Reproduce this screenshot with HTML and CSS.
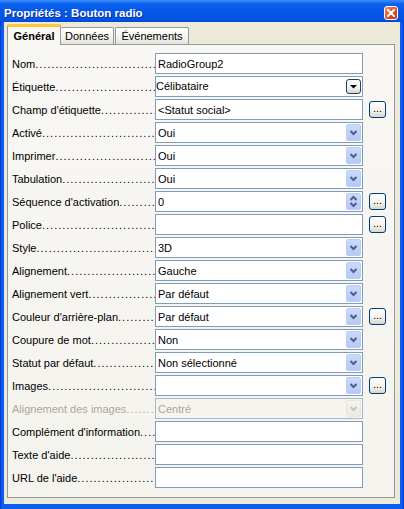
FILE: index.html
```html
<!doctype html>
<html lang="fr">
<head>
    <meta charset="UTF-8">
    <title>Propriétés : Bouton radio</title>
    <link rel="stylesheet" href="styles.css">
</head>
<body>
<div class="window">
    <div class="titlebar">
        <span class="title">Propriétés : Bouton radio</span>
        <span class="close">
            <svg width="12" height="12" viewBox="0 0 12 12"><path d="M3 3 L9 9 M9 3 L3 9" stroke="#fff" stroke-width="2" stroke-linecap="square"/></svg>
        </span>
    </div>
    <div class="client">
        <div class="tabs">
            <div class="tab active">Général</div>
            <div class="tab tab-data">Données</div>
            <div class="tab tab-events">Événements</div>
        </div>
        <div class="panel">
            <div class="row">
                <span class="label">Nom</span>
                <div class="field"><span class="value">RadioGroup2</span></div>
            </div>
            <div class="row">
                <span class="label">Étiquette</span>
                <div class="field"><span class="value flush">Célibataire</span>
                    <span class="list-btn"><svg width="13" height="13" viewBox="0 0 13 13"><polygon points="3,5 10,5 6.5,8.5" fill="#000"/></svg></span>
                </div>
            </div>
            <div class="row">
                <span class="label">Champ d'étiquette</span>
                <div class="field"><span class="value">&lt;Statut social&gt;</span></div>
                <span class="more">...</span>
            </div>
            <div class="row">
                <span class="label">Activé</span>
                <div class="field"><span class="value">Oui</span>
                    <span class="drop"><svg width="13" height="15" viewBox="0 0 13 15"><path d="M3.5 6 L6.5 9 L9.5 6" fill="none"/></svg></span>
                </div>
            </div>
            <div class="row">
                <span class="label">Imprimer</span>
                <div class="field"><span class="value">Oui</span>
                    <span class="drop"><svg width="13" height="15" viewBox="0 0 13 15"><path d="M3.5 6 L6.5 9 L9.5 6" fill="none"/></svg></span>
                </div>
            </div>
            <div class="row">
                <span class="label">Tabulation</span>
                <div class="field"><span class="value">Oui</span>
                    <span class="drop"><svg width="13" height="15" viewBox="0 0 13 15"><path d="M3.5 6 L6.5 9 L9.5 6" fill="none"/></svg></span>
                </div>
            </div>
            <div class="row">
                <span class="label">Séquence d'activation</span>
                <div class="field"><span class="value">0</span>
                    <span class="drop"><svg width="13" height="15" viewBox="0 0 13 15"><path d="M3.5 6 L6.5 3 L9.5 6 M3.5 9 L6.5 12 L9.5 9" fill="none"/></svg></span>
                </div>
                <span class="more">...</span>
            </div>
            <div class="row">
                <span class="label">Police</span>
                <div class="field"><span class="value"></span></div>
                <span class="more">...</span>
            </div>
            <div class="row">
                <span class="label">Style</span>
                <div class="field"><span class="value">3D</span>
                    <span class="drop"><svg width="13" height="15" viewBox="0 0 13 15"><path d="M3.5 6 L6.5 9 L9.5 6" fill="none"/></svg></span>
                </div>
            </div>
            <div class="row">
                <span class="label">Alignement</span>
                <div class="field"><span class="value">Gauche</span>
                    <span class="drop"><svg width="13" height="15" viewBox="0 0 13 15"><path d="M3.5 6 L6.5 9 L9.5 6" fill="none"/></svg></span>
                </div>
            </div>
            <div class="row">
                <span class="label">Alignement vert</span>
                <div class="field"><span class="value">Par défaut</span>
                    <span class="drop"><svg width="13" height="15" viewBox="0 0 13 15"><path d="M3.5 6 L6.5 9 L9.5 6" fill="none"/></svg></span>
                </div>
            </div>
            <div class="row">
                <span class="label">Couleur d'arrière-plan</span>
                <div class="field"><span class="value">Par défaut</span>
                    <span class="drop"><svg width="13" height="15" viewBox="0 0 13 15"><path d="M3.5 6 L6.5 9 L9.5 6" fill="none"/></svg></span>
                </div>
                <span class="more">...</span>
            </div>
            <div class="row">
                <span class="label">Coupure de mot</span>
                <div class="field"><span class="value">Non</span>
                    <span class="drop"><svg width="13" height="15" viewBox="0 0 13 15"><path d="M3.5 6 L6.5 9 L9.5 6" fill="none"/></svg></span>
                </div>
            </div>
            <div class="row">
                <span class="label">Statut par défaut</span>
                <div class="field"><span class="value">Non sélectionné</span>
                    <span class="drop"><svg width="13" height="15" viewBox="0 0 13 15"><path d="M3.5 6 L6.5 9 L9.5 6" fill="none"/></svg></span>
                </div>
            </div>
            <div class="row">
                <span class="label">Images</span>
                <div class="field"><span class="value"></span>
                    <span class="drop"><svg width="13" height="15" viewBox="0 0 13 15"><path d="M3.5 6 L6.5 9 L9.5 6" fill="none"/></svg></span>
                </div>
                <span class="more">...</span>
            </div>
            <div class="row disabled">
                <span class="label">Alignement des images</span>
                <div class="field"><span class="value">Centré</span>
                    <span class="drop"><svg width="13" height="15" viewBox="0 0 13 15"><path d="M3.5 6 L6.5 9 L9.5 6" fill="none"/></svg></span>
                </div>
            </div>
            <div class="row">
                <span class="label">Complément d'information</span>
                <div class="field"><span class="value"></span></div>
            </div>
            <div class="row">
                <span class="label">Texte d'aide</span>
                <div class="field"><span class="value"></span></div>
            </div>
            <div class="row">
                <span class="label">URL de l'aide</span>
                <div class="field"><span class="value"></span></div>
            </div>
        </div>
    </div>
</div>
</body>
</html>
```

FILE: styles.css
```css
* {
    box-sizing: border-box;
}

body {
    margin: 0;
    font-family: "Liberation Sans", Arial, sans-serif;
    font-size: 11px;
    color: #000;
}

.window {
    display: flex;
    flex-direction: column;
    width: 404px;
    height: 509px;
    background: linear-gradient(90deg, #0831d9, #0a5ff0 2px, #0a5ff0 402px, #0831d9);
}

/* title bar */
.titlebar {
    display: flex;
    align-items: center;
    justify-content: space-between;
    height: 22px;
    padding: 3px 6px 0 4px;
    background: linear-gradient(#3d8ffb, #0a61ee 18%, #0558e8 50%, #0453e4 85%, #0249d8);
}

.title {
    font-size: 11.5px;
    font-weight: bold;
    color: #fff;
    text-shadow: 1px 1px 0 #0a2f9a;
}

.close {
    display: flex;
    align-items: center;
    justify-content: center;
    width: 14px;
    height: 14px;
    border: 1px solid #fff;
    border-radius: 3px;
    background: linear-gradient(135deg, #f0906e, #dd4a20 55%, #c53a12);
}

/* dialog body */
.client {
    display: flex;
    flex: 1;
    flex-direction: column;
    margin: 0 4px 5px 4px;
    padding: 2px 5px 6px 3px;
    background: #ece9d8;
}

.tabs {
    display: flex;
    align-items: flex-end;
    height: 20px;
}

.tab {
    height: 17px;
    padding-top: 2px;
    border: 1px solid #919b9c;
    border-bottom: 0;
    border-radius: 2px 2px 0 0;
    text-align: center;
    background: linear-gradient(#fff, #f4f3ee 60%, #e4e2da);
}

.tab.active {
    position: relative;
    z-index: 1;
    width: 54px;
    height: 21px;
    margin-bottom: -1px;
    padding-top: 3px;
    border-top: 3px solid #ffc73c;
    font-weight: bold;
    background: #f8f7f3;
}

.tab-data {
    width: 53px;
    border-left: 0;
}

.tab-events {
    width: 74px;
    margin-left: 1px;
}

.panel {
    flex: 1;
    padding: 8px 4px 0 4px;
    border: 1px solid #919b9c;
    background: linear-gradient(#f8f7f3, #f4f3ee);
}

/* property rows */
.row {
    display: flex;
    align-items: center;
    height: 21px;
    margin-bottom: 2px;
}

.label {
    width: 143px;
    overflow: hidden;
    white-space: nowrap;
}

.label::after {
    content: "................................................";
    letter-spacing: 1px;
}

.field {
    display: flex;
    align-items: center;
    width: 208px;
    height: 21px;
    border: 1px solid #7f9db9;
    background: #fff;
}

.value {
    flex: 1;
    padding-left: 2px;
    white-space: nowrap;
}

.value.flush {
    padding-left: 0;
    margin-top: -2px;
}

/* combo and spin buttons */
.drop {
    display: block;
    width: 15px;
    height: 17px;
    margin-right: 1px;
    border: 1px solid #b9cdf7;
    border-radius: 2px;
    background: linear-gradient(#cbdafc, #b6c8f6);
}

.drop svg {
    display: block;
    stroke: #4d6185;
    stroke-width: 2;
}

.list-btn {
    display: block;
    width: 15px;
    height: 15px;
    margin-right: 1px;
    border: 1px solid #1c3f78;
    border-radius: 3px;
    background: linear-gradient(#fff, #f2f1ec 60%, #d8d4c8);
}

.list-btn svg {
    display: block;
}

.more {
    display: flex;
    align-items: flex-end;
    justify-content: center;
    width: 17px;
    height: 17px;
    margin-left: 6px;
    padding-bottom: 3px;
    border: 1px solid #003c74;
    border-radius: 3px;
    line-height: 1;
    background: linear-gradient(#fff, #f3f2ee 60%, #d9d5cb);
}

.disabled .label {
    color: #aca899;
}

.disabled .field {
    border-color: #a5b8cc;
    color: #aca899;
    background: #f5f4ef;
}

.disabled .drop {
    border-color: #e8e6de;
    background: linear-gradient(#f4f3ee, #ebeae4);
}

.disabled .drop svg {
    stroke: #c9c7ba;
}
```
